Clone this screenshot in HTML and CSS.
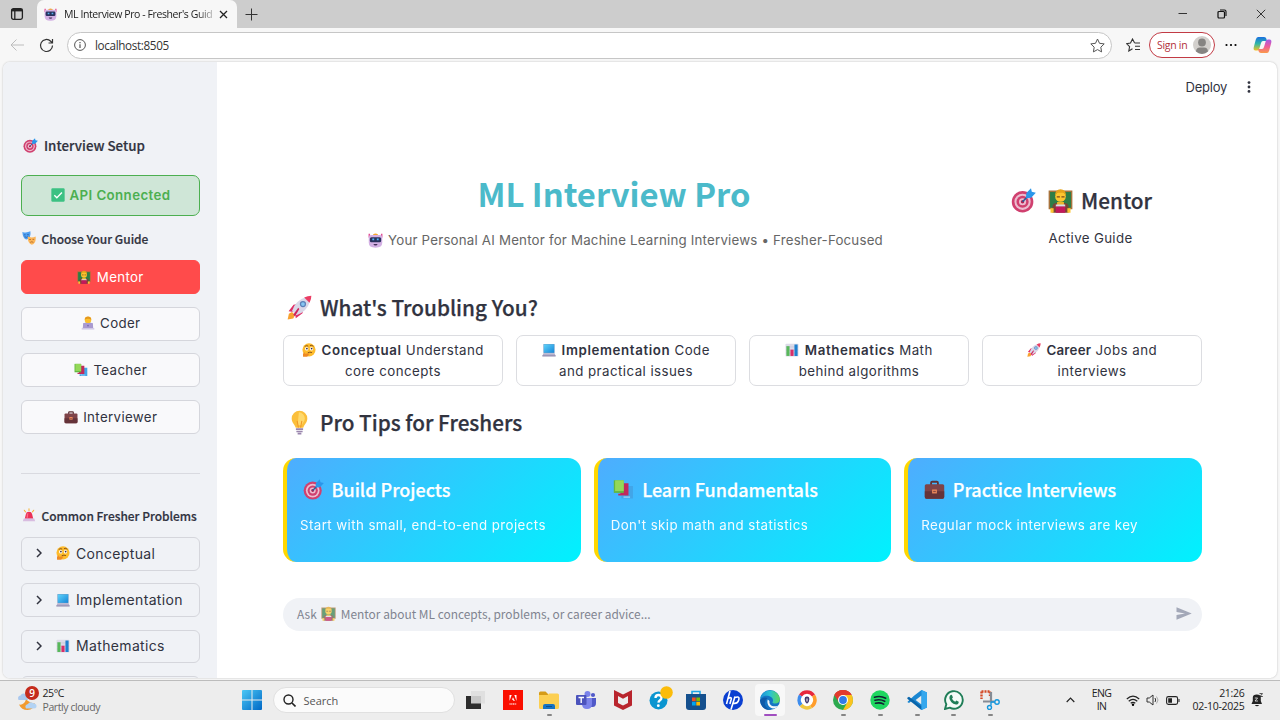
FILE: index.html
```html
<!DOCTYPE html>
<html lang="en">
<head>
<meta charset="utf-8">
<title>ML Interview Pro - Fresher's Guide</title>
<link rel="stylesheet" href="styles.css">
</head>
<body>
<svg class="defs" aria-hidden="true">
  <defs>
    <linearGradient id="g-win" x1="0" y1="0" x2="1" y2="1"><stop offset="0" stop-color="#4cc8f5"/><stop offset="1" stop-color="#0067c5"/></linearGradient>
    <linearGradient id="g-edge" x1="0" y1="0" x2="1" y2="0"><stop offset="0" stop-color="#1b8fd8"/><stop offset=".5" stop-color="#2bc3d2"/><stop offset="1" stop-color="#5fd65a"/></linearGradient>
    <linearGradient id="g-cop1" x1="0" y1="0" x2="0" y2="1"><stop offset="0" stop-color="#1a6fe0"/><stop offset=".5" stop-color="#2fb7a6"/><stop offset="1" stop-color="#f3c321"/></linearGradient>
    <linearGradient id="g-cop2" x1="0" y1="0" x2="0" y2="1"><stop offset="0" stop-color="#a45be8"/><stop offset=".5" stop-color="#ee5a9c"/><stop offset="1" stop-color="#fb9a4a"/></linearGradient>
    <linearGradient id="g-screen" x1="0" y1="0" x2="1" y2="1"><stop offset="0" stop-color="#5fd3fa"/><stop offset="1" stop-color="#1787d8"/></linearGradient>
  </defs>
  <symbol id="target" viewBox="0 0 16 16"><circle cx="7.4" cy="8.8" r="6.9" fill="#d0406f"/><circle cx="7.4" cy="8.8" r="5.2" fill="#ecbdd0"/><circle cx="7.4" cy="8.8" r="3.9" fill="#d0406f"/><circle cx="7.4" cy="8.8" r="2.3" fill="#ecbdd0"/><circle cx="7.4" cy="8.8" r="1.1" fill="#b3204f"/><path d="M7.4 8.8 12 4" stroke="#24609c" stroke-width="1"/><path d="M9.600 6.500 9.800 3.200 12.8.2l.5 2.200 2.600.6-3 3.200z" fill="#2b96ea"/></symbol>
  <symbol id="mentor" viewBox="0 0 16 16"><path fill="#a8733c" d="M.4 1.6h15.2v12H.4z"/><path fill="#2e7d46" d="M1.3 2.5h13.4v10.2H1.3z"/><path fill="#7b4336" d="M2.800 15.800v-3.400q0-2.800 3-2.800h4.400q3 0 3 2.800v3.400z"/><path fill="#e9b52b" d="M5.800 9h4.400v2.400H5.800z"/><circle cx="8" cy="5.400" r="3.400" fill="#fdc52f"/><path fill="#e6a31b" d="M4.500 4.900Q4.600.8 8 .8t3.500 4.100L10 3H6z"/><path d="M5.600 5.600h2M8.600 5.600h2" stroke="#7a4a1d" stroke-width=".8"/><path fill="#d8dce6" d="M5 10.600h6v1.400H5z"/><path fill="#c2185b" d="M5 11.800h6v4H5z"/><path fill="#fdc52f" d="M1.600 13h2v2.800h-2zM12.400 13h2v2.800h-2z"/></symbol>
  <symbol id="coder" viewBox="0 0 16 16"><path fill="#5aa0dc" d="M2.600 11q0-3.600 3.600-3.600h3.600q3.600 0 3.600 3.600v2H2.600z"/><circle cx="8" cy="4.600" r="3.700" fill="#fcc02d"/><path fill="#e5981c" d="M4.200 4.200Q4.400.5 8 .5t3.800 3.700Q8 1.800 4.200 4.200z"/><path fill="#a99ad0" d="M2.600 8h10.800l.6 6H2z"/><circle cx="8" cy="11" r=".9" fill="#7262a8"/><path fill="#c9bfe3" d="M.8 14h14.400v1.400H.8z"/></symbol>
  <symbol id="books" viewBox="0 0 16 16"><path fill="#42a5e8" d="M9.200 5.400h6v9.400H6.400v-2h2.800z"/><path fill="#9bd3f5" d="M8 13.300h5v1H8z"/><path fill="#c2295c" d="M5.600 3.200h6.200v9.400H4v-1.400h1.600z"/><path fill="#63b741" d="M.6 1h7.600v9.600H.6z"/><path fill="#94d858" d="M1.600 1h6.600v8.200H1.600z"/></symbol>
  <symbol id="case" viewBox="0 0 16 16"><path fill="none" stroke="#5c3135" stroke-width="1.400" d="M5.400 4.600V2.900q0-.8.8-.8h3.600q.8 0 .8.8v1.700"/><rect x=".6" y="4" width="14.800" height="11" rx="1.200" fill="#7f4348"/><path fill="#653339" d="M.6 9.400h14.800v4.400q0 1.200-1.200 1.200H1.800q-1.200 0-1.200-1.200z"/><path fill="#f08a5a" d="M6.200 8h3.600v3H6.200z"/><path fill="#8b4a45" d="M7 9h2v1H7z"/></symbol>
  <symbol id="robot" viewBox="0 0 16 16"><path fill="#f7a52d" d="M5 2.600Q5.200.6 8 .6t3 2z"/><path fill="#e24c93" d="M.6.800h1.600v4H.6zM13.800.8h1.600v4h-1.600z"/><path fill="#d3b0e4" d="M.8 4.600Q.8 2 3.400 2h9.200q2.600 0 2.600 2.600v5.800q0 5.200-7.200 5.200T.8 10.400z"/><rect x="2" y="4.400" width="12" height="5.400" rx="1.600" fill="#29325e"/><path fill="#54b6f5" d="M4.600 5.800h2v2h-2zM9.400 5.800h2v2h-2z"/><path fill="#46315c" d="M5.800 11.600h4.400q-.2 1.700-2.200 1.700t-2.200-1.700z"/></symbol>
  <symbol id="rocket" viewBox="0 0 16 16"><path fill="#f8a130" d="M.4 15.600 1.200 12l2-1.200 2 2L4 15z"/><path fill="#df2f67" d="M1 10.400 4.200 6.200 7 5.800l-3 5zM5.600 14.900l4.300-3.200.4-3-5.100 3.200z"/><path fill="#d9d7e8" d="M3.200 10.200Q5.600 3 12.400 1.200l2.400 2.400Q13 10.400 6 13z"/><path fill="#eb3d64" d="M11 1.600Q13.200.4 15.600.4q0 2.400-1.200 4.600z"/><path fill="#ce235b" d="M4 12.600 7.200 8.200l.7.8-2.800 4.600z"/><circle cx="10.200" cy="5.800" r="2" fill="#5b7fb8"/><circle cx="10.200" cy="5.800" r="1.200" fill="#85c6f1"/></symbol>
  <symbol id="bulb" viewBox="0 0 16 16"><path fill="#fbbf3b" d="M8 .4a5 5 0 0 1 5 5c0 2.800-2 3.800-2.600 6H5.600C5 9.200 3 8.200 3 5.400a5 5 0 0 1 5-5z"/><path fill="#ffe079" d="M7.600 1.500a4 4 0 0 1 3.800 4c0 1.800-1.200 2.500-1.900 4.200H6.800z" opacity=".8"/><path fill="none" stroke="#f19a27" stroke-width=".7" d="M6.500 7 7.300 11.300M9.500 7 8.700 11.300"/><path fill="#9a86ae" d="M5.700 11.600h4.600v1.200H5.700zM6 13.200h4v1H6zM6.800 14.600h2.400v1H6.800z"/></symbol>
  <symbol id="think" viewBox="0 0 16 16"><circle cx="8" cy="7.800" r="7.500" fill="#fdbb2c"/><ellipse cx="5.400" cy="6.600" rx="1.900" ry="2.100" fill="#fff"/><ellipse cx="10.800" cy="6.600" rx="1.900" ry="2.100" fill="#fff"/><circle cx="5.600" cy="6.300" r="1" fill="#3b2a3e"/><circle cx="11" cy="6.300" r="1" fill="#3b2a3e"/><path fill="none" stroke="#6f3d17" stroke-width=".9" stroke-linecap="round" d="M3.500 3.600q1.700-1.200 3.200-.3M9.500 2.800q2-.9 3.300.7M7 10.900q2-1 4-.1"/><path fill="#ef8a23" d="M1.200 15.600q-.8-3.400 1.400-5.200l.8 1.800 4.800-.6q.8 1-.6 1.500-.2 2.700-3.400 2.700z"/></symbol>
  <symbol id="laptop" viewBox="0 0 16 16"><rect x="1.600" y="1" width="12.800" height="10.600" rx=".7" fill="#6a9cc8"/><path fill="url(#g-screen)" d="M2.200 1.600h11.600v9.400H2.200z"/><path fill="#b5b0cc" d="M1.600 11.600h12.800l1.200 3.200H.4z"/><path fill="#8a84a8" d="M.4 14.200h15.200v1.200H.4z"/></symbol>
  <symbol id="chart" viewBox="0 0 16 16"><rect x=".6" y=".8" width="14.800" height="14.600" rx=".8" fill="#dcdbe8"/><path stroke="#b8b5cc" stroke-width=".5" d="M1 4.500h14M1 8h14M1 11.500h14"/><path fill="#58b85b" d="M1.600 3.600h3.600v11.200H1.600z"/><path fill="#d72f6a" d="M6.200 7.600h3.600v7.200H6.200z"/><path fill="#1e80cf" d="M10.800 1.600h3.600v13.200h-3.600z"/></symbol>
  <symbol id="masks" viewBox="0 0 16 16"><path fill="#4f9ff0" d="M.4 1Q5 2.600 9.600.4q1.100 8-4.200 9.400Q.8 8.800.4 1z"/><path fill="none" stroke="#1d4f9c" stroke-width=".8" d="M2.200 4.400h1.900M5.900 4.200h1.900M3 6.500q2.200 1.500 4-.1"/><path fill="#fbb65a" d="M6.600 6.400Q11 8.400 15.600 6.200q.8 8-4.400 9.400-5-1.400-4.600-9.200z"/><path fill="none" stroke="#a5591b" stroke-width=".8" d="M8.200 9.700h2M12 9.600h1.900M9.400 13q1.800-1.400 3.600 0"/></symbol>
  <symbol id="siren" viewBox="0 0 16 16"><path stroke="#f9b233" stroke-width="1.200" stroke-linecap="round" d="M8 .8v2M2.600 2.600 4 4.400M13.400 2.600 12 4.400"/><path fill="#ea3156" d="M3.200 12.200 4.400 7Q4.800 4.400 8 4.400T11.600 7l1.200 5.200z"/><path fill="#ff6b84" d="M5.700 7.200q.4-1.500 1.500-1.500L6.800 11H5.100z"/><path fill="#d8bce0" d="M2 12h12l1 3.200H1z"/></symbol>
  <symbol id="check" viewBox="0 0 16 16"><rect x=".4" y=".4" width="15.200" height="15.200" rx="1.400" fill="#3cc183"/><path fill="none" stroke="#fff" stroke-width="1.500" d="m3.800 8.200 2.900 2.900 5.800-6"/></symbol>
</svg>

<header class="tabstrip">
  <div class="tab-actions"><svg width="14" height="14" viewBox="0 0 14 14"><rect x="1.600" y="1.600" width="10.800" height="10.800" rx="1.800" fill="none" stroke="#222" stroke-width="1.300"/><path d="M1.600 3.200h10.800" stroke="#222" stroke-width="2.400"/><path d="M4.800 4v8" stroke="#222" stroke-width="1.300"/></svg></div>
  <div class="tab"><svg class="fav"><use href="#robot"/></svg><span class="tab-title">ML Interview Pro - Fresher's Guid</span><svg width="9" height="9" viewBox="0 0 9 9"><path d="m1 1 7 7M8 1 1 8" stroke="#222" stroke-width="1.300"/></svg></div>
  <svg class="new-tab" width="13" height="13" viewBox="0 0 13 13"><path d="M6.500.5v12M.5 6.500h12" stroke="#333"/></svg>
  <div class="window-controls">
    <svg width="10" height="10" viewBox="0 0 10 10"><path d="M.5 4.500h8.500" stroke="#333"/></svg>
    <svg width="10" height="10" viewBox="0 0 10 10"><rect x="1" y="2.500" width="6.500" height="6.500" rx="1" fill="none" stroke="#111" stroke-width="1.200"/><path d="M3 1h4.500Q9 1 9 2.500V7" fill="none" stroke="#111" stroke-width="1.100"/></svg>
    <svg width="10" height="10" viewBox="0 0 10 10"><path d="m.8.800 8.400 8.400M9.200.8.800 9.200" stroke="#333"/></svg>
  </div>
</header>

<nav class="toolbar">
  <svg width="14" height="14" viewBox="0 0 14 14"><path d="M14 7H1M6.500 1.500 1 7l5.500 5.500" fill="none" stroke="#bdbdbd"/></svg>
  <svg width="15" height="15" viewBox="0 0 15 15"><path d="M13.500 7.500a6 6 0 1 1-1.800-4.300l1.600 1.600M13.500 1v4h-4" fill="none" stroke="#333" stroke-width="1.200"/></svg>
  <div class="address">
    <svg width="12" height="12" viewBox="0 0 12 12"><circle cx="6" cy="6" r="5.400" fill="none" stroke="#555"/><path d="M6 5.300V9M6 3v1.200" stroke="#444" stroke-width="1.100"/></svg>
    <span>localhost:8505</span>
    <svg class="star" width="15" height="15" viewBox="0 0 15 15"><path d="m7.500 1 2 4.300 4.700.6-3.400 3.300.8 4.700-4.100-2.300-4.100 2.300.8-4.700L.8 5.900l4.700-.6z" fill="none" stroke="#555"/></svg>
  </div>
  <svg class="favs" width="15" height="14" viewBox="0 0 15 14"><path d="M8.500 4.800 6.500 1l-2 4L.6 5.600l3 3-.8 4.400 3.700-2.200M8.500 5H14M9 8.300h5M9 11.500h5" fill="none" stroke="#333" stroke-width="1.100"/></svg>
  <div class="signin"><span>Sign in</span><svg width="18" height="18" viewBox="0 0 18 18"><circle cx="9" cy="9" r="9" fill="#d3d0cd"/><circle cx="9" cy="6.500" r="3.900" fill="#868482"/><path d="M3 15.600q.2-4 4-4h4q3.800 0 4 4Q12.500 18 9 18t-6-2.400z" fill="#868482"/></svg></div>
  <svg class="dots" width="12" height="4" viewBox="0 0 12 4"><circle cx="1.500" cy="2" r="1.100"/><circle cx="6" cy="2" r="1.100"/><circle cx="10.500" cy="2" r="1.100"/></svg>
  <svg class="copilot" width="19" height="18" viewBox="0 0 19 18"><path d="M5 1h6q2 0 2.500 2l.4 2H10Q8.500 5 8 7l-1.800 6Q5.800 14.500 4 14.500H2.500Q0 14.500.8 11l2-7.500Q3.500 1 5 1z" fill="url(#g-cop1)"/><path d="M14 17H8q-2 0-2.500-2L5 13h4q1.500 0 2-2l1.800-6q.4-1.500 2.200-1.500h1.500Q19 3.500 18.200 7l-2 7.500Q15.500 17 14 17z" fill="url(#g-cop2)"/></svg>
</nav>

<div class="viewport">
<div class="page">
  <aside class="sidebar">
    <h3 class="side-title"><svg class="e15"><use href="#target"/></svg><span>Interview Setup</span></h3>
    <div class="status"><svg class="e14"><use href="#check"/></svg><span>API Connected</span></div>
    <h4 class="side-sub guide"><svg class="e14"><use href="#masks"/></svg><span>Choose Your Guide</span></h4>
    <div class="guides">
      <button class="btn primary"><svg class="e14"><use href="#mentor"/></svg>Mentor</button>
      <button class="btn"><svg class="e14"><use href="#coder"/></svg>Coder</button>
      <button class="btn"><svg class="e14"><use href="#books"/></svg>Teacher</button>
      <button class="btn"><svg class="e14"><use href="#case"/></svg>Interviewer</button>
    </div>
    <hr class="rule">
    <h4 class="side-sub problems"><svg class="e14"><use href="#siren"/></svg><span>Common Fresher Problems</span></h4>
    <div class="guides">
      <div class="expander"><svg class="chev" viewBox="0 0 6 10"><path d="m1 1 4 4-4 4"/></svg><svg class="e14"><use href="#think"/></svg>Conceptual</div>
      <div class="expander"><svg class="chev" viewBox="0 0 6 10"><path d="m1 1 4 4-4 4"/></svg><svg class="e14"><use href="#laptop"/></svg>Implementation</div>
      <div class="expander"><svg class="chev" viewBox="0 0 6 10"><path d="m1 1 4 4-4 4"/></svg><svg class="e14"><use href="#chart"/></svg>Mathematics</div>
      <div class="expander"></div>
    </div>
  </aside>

  <main class="main">
    <div class="app-bar"><span>Deploy</span><svg width="4" height="12" viewBox="0 0 4 12" fill="#31333f"><circle cx="2" cy="1.600" r="1.400"/><circle cx="2" cy="6" r="1.400"/><circle cx="2" cy="10.400" r="1.400"/></svg></div>
    <div class="hero">
      <div class="brand">
        <h1>ML Interview Pro</h1>
        <p class="tagline"><svg class="e15"><use href="#robot"/></svg><span>Your Personal AI Mentor for Machine Learning Interviews • Fresher-Focused</span></p>
      </div>
      <div class="active">
        <h3><svg class="e25"><use href="#target"/></svg><svg class="e25"><use href="#mentor"/></svg><span>Mentor</span></h3>
        <p>Active Guide</p>
      </div>
    </div>

    <h2 class="section first"><svg class="e25"><use href="#rocket"/></svg><span>What's Troubling You?</span></h2>
    <div class="topics">
      <button class="topic"><span><svg class="e14"><use href="#think"/></svg><b class="wide">Conceptual</b> Understand</span><span>core concepts</span></button>
      <button class="topic"><span><svg class="e14"><use href="#laptop"/></svg><b class="wide">Implementation</b> Code</span><span>and practical issues</span></button>
      <button class="topic"><span><svg class="e14"><use href="#chart"/></svg><b class="wide">Mathematics</b> Math</span><span>behind algorithms</span></button>
      <button class="topic"><span><svg class="e14"><use href="#rocket"/></svg><b>Career</b> Jobs and</span><span>interviews</span></button>
    </div>

    <h2 class="section second"><svg class="e25"><use href="#bulb"/></svg><span>Pro Tips for Freshers</span></h2>
    <div class="tips">
      <article class="tip"><h3><svg class="e21"><use href="#target"/></svg><span>Build Projects</span></h3><p>Start with small, end-to-end projects</p></article>
      <article class="tip"><h3><svg class="e21"><use href="#books"/></svg><span>Learn Fundamentals</span></h3><p>Don't skip math and statistics</p></article>
      <article class="tip"><h3><svg class="e21"><use href="#case"/></svg><span>Practice Interviews</span></h3><p>Regular mock interviews are key</p></article>
    </div>

    <div class="chat"><span>Ask</span><svg class="e15"><use href="#mentor"/></svg><span>Mentor about ML concepts, problems, or career advice...</span><svg class="send" width="16" height="13" viewBox="0 0 16 13"><path d="M.5.3 15.700 6.500.5 12.700V8L9 6.500.5 5z" fill="#a3a8b8"/></svg></div>
  </main>
</div>
</div>

<footer class="taskbar">
  <div class="weather">
    <div class="weather-icon"><svg width="22" height="22" viewBox="0 0 22 22"><path d="M1.500 11q-1.500-4 2-4.500Q5 3.500 9 5l2 6z" fill="#a9c8ef"/><path d="M2 15.500q5 1 7-5 5 4 9 4-1 6.500-7.500 6.500-6 0-8.500-5.500z" fill="#f29a2e"/><path d="M9 19.500q-2-3.500 2-4.500 1.500-3 5-1 4 .5 3.500 4-.5 1.500-3 1.500z" fill="#b3d3f4"/></svg><span class="badge">9</span></div>
    <div class="weather-text"><span>25°C</span><span class="muted">Partly cloudy</span></div>
  </div>
  <svg class="start" width="20" height="20" viewBox="0 0 20 20"><path d="M0 1Q0 0 1 0h8.500v9.500H0zM10.500 0H19q1 0 1 1v8.500h-9.500zM0 10.500h9.500V20H1q-1 0-1-1zM10.500 10.500H20V19q0 1-1 1h-8.500z" fill="url(#g-win)"/></svg>
  <div class="search"><svg width="13" height="13" viewBox="0 0 13 13"><circle cx="5.500" cy="5.500" r="4.500" fill="none" stroke="#222" stroke-width="1.400"/><path d="m9 9 3.500 3.500" stroke="#222" stroke-width="1.600"/></svg><span>Search</span></div>
  <div class="apps">
    <div class="app"><svg viewBox="0 0 20 20"><path d="M0 6h15v13H0z" fill="#2c2c2c"/><path d="M5 1h14v12.500H5z" fill="#dedede" opacity=".88"/></svg></div>
    <div class="app"><svg viewBox="0 0 20 20"><path d="M0 0h20v20H0z" fill="#fa0f00"/><path d="M6.500 11V5h2.200zM13.500 11V5h-2.200zM10 7.200 11.800 11h-1.200L10 9.700H8.900z" fill="#fff"/><path d="M6.500 14h7" stroke="#ffc4c0" stroke-width="1.600" stroke-dasharray="1.200 .5"/></svg></div>
    <div class="app run"><svg viewBox="0 0 20 20"><path d="M0 3q0-1.500 1.500-1.500h5L9 4v3H0z" fill="#d59b18"/><path d="M0 5h8.500L10 3.500h8.500Q20 3.500 20 5v12.500q0 1.500-1.500 1.500h-17Q0 19 0 17.500z" fill="#fccf52"/><path d="M4 19v-3q0-2 2-2h8q2 0 2 2v3z" fill="#1673c4"/><path d="M7 16h6v1H7z" fill="#0c4d8d"/></svg></div>
    <div class="app"><svg viewBox="0 0 20 20"><circle cx="11.500" cy="4" r="3" fill="#7b83eb"/><circle cx="17" cy="5" r="2.100" fill="#5059c9"/><path d="M14 8h6v5q0 4-3.500 4H14z" fill="#5059c9"/><path d="M6 8h10v6q0 5-5 5t-5-5z" fill="#7b83eb"/><rect y="5" width="10.500" height="10" rx="1" fill="#4b53bc"/><path d="M2.500 7.500H8M5.200 7.500V13" stroke="#fff" stroke-width="1.400"/></svg></div>
    <div class="app"><svg viewBox="0 0 20 20"><path d="m1 0 9 4.500L19 0v15.500L10 20l-9-4.500zM5 6v7l5 2.600 5-2.600V6l-5 2.700z" fill="#b9252d" fill-rule="evenodd"/></svg></div>
    <div class="app"><svg viewBox="0 0 20 20" class="overflow"><circle cx="8.500" cy="10.500" r="9" fill="#0a95d0"/><path d="M5.500 8q0-3 3-3t3 2.700q0 1.500-1.500 2.500t-1.600 2.500" fill="none" stroke="#fff" stroke-width="2.300"/><circle cx="8.300" cy="15.700" r="1.400" fill="#fff"/><circle cx="16.500" cy="2.500" r="6.300" fill="#fbbc0a"/></svg></div>
    <div class="app"><svg viewBox="0 0 20 20"><path d="M6 5V1.500h8V5" fill="none" stroke="#1ea6e6" stroke-width="1.600"/><path d="M0 4h20v13q0 3-3 3H3q-3 0-3-3z" fill="#15508e"/><path d="M6 7.500h3.700v3.700H6z" fill="#f25022"/><path d="M10.300 7.500H14v3.700h-3.700z" fill="#7fba00"/><path d="M6 11.800h3.700v3.700H6z" fill="#00a4ef"/><path d="M10.300 11.800H14v3.700h-3.700z" fill="#ffb900"/></svg></div>
    <div class="app"><svg viewBox="0 0 20 20"><circle cx="10" cy="10" r="10" fill="#0a3fd1"/><path d="M7 1 3.500 14M4.900 8.500q4-2 3.300.8L6.900 14M12 6.500 8 19.500M11.700 7.500q5.300-1.800 4.100 2.200-1 4.300-5.800 3.500" fill="none" stroke="#fff" stroke-width="1.600"/></svg></div>
    <div class="app run active-app"><svg viewBox="0 0 20 20"><circle cx="10" cy="10" r="10" fill="#1474c4"/><path d="M.3 8.500C1.500-1 17-3 19.800 8.500c.4 4-3 5.500-6.300 4.800-2-.5-.3-1.300-.5-3.200C12.600 5.500 4.500 4 .3 8.500z" fill="url(#g-edge)"/><path d="M7.800 9.600c-1.400 3 .6 8.500 5.200 8.800 2.500 0 4.600-1.400 5.500-2.900-5.500 2.400-10-.7-9-4.500z" fill="#f3f8fb"/><path d="M7.500 8q-4.500 3.500-1.700 8.500Q8 19.800 11 20q-9.500.500-11-9.500Q3.500 6 7.500 8z" fill="#0f5aa8"/></svg></div>
    <div class="app"><svg viewBox="0 0 20 20"><circle cx="10" cy="10" r="7" fill="#fff"/><g fill="none" stroke-width="3.600"><path d="M3.500 5.500A7.800 7.800 0 0 1 16.500 5.500" stroke="#e8273c"/><path d="M16.500 5.500A7.800 7.800 0 0 1 14 16.800" stroke="#ff9d2b"/><path d="M14 16.800A7.800 7.800 0 0 1 4 15" stroke="#f0c840"/><path d="M4 15A7.800 7.800 0 0 1 3.500 5.500" stroke="#3d8ced"/></g><path d="M10 6.500q2.400 0 2.400 2.400 0 3-2.400 4.900-2.400-1.900-2.400-4.900 0-2.400 2.400-2.400z" fill="#41396e"/><path d="M10 8.500v3" stroke="#fff" stroke-width="1"/></svg></div>
    <div class="app run"><svg viewBox="0 0 20 20"><circle cx="10" cy="10" r="10" fill="#2da94f"/><path d="M10 10 1.340 5A10 10 0 0 1 18.660 5z" fill="#e23b2e"/><path d="M1.340 5 6 12.500 10 5h8.660A10 10 0 0 0 1.340 5z" fill="#e23b2e"/><path d="M10 5h8.660A10 10 0 0 1 10 20l4.300-7.500z" fill="#fcc31e"/><circle cx="10" cy="10" r="5" fill="#fff"/><circle cx="10" cy="10" r="3.900" fill="#317be8"/></svg></div>
    <div class="app run"><svg viewBox="0 0 20 20"><circle cx="10" cy="10" r="9.700" fill="#1ed760"/><path d="M4.500 7.200q6-1.700 11.200 1M5 10.300q5.300-1.400 9.700 1M5.500 13.300q4.500-1.100 8.200.8" fill="none" stroke="#123" stroke-width="1.600" stroke-linecap="round"/></svg></div>
    <div class="app run"><svg viewBox="0 0 20 20"><path d="m14.500 0 5.500 2.500v15L14.500 20 4.500 11 2 13l-1.700-1L7 5.800z" fill="#1b87d2"/><path d="M.3 7.800 2 6.800l12.500 9.500V20L.3 8.700z" fill="#0965ab"/><path d="M14.500 5.500v9L8.600 10z" fill="#ededed"/><path d="M14.500 0 20 2.500v15L14.500 20z" fill="#35a7ed"/></svg></div>
    <div class="app run"><svg viewBox="0 0 20 20"><path d="M1 19 2.300 14.300A8.800 8.800 0 1 1 5.800 17.700z" fill="#f4fbf7" stroke="#1f7d57" stroke-width="1.900"/><path d="M6.300 5.200q1.300-1 2 .6l.6 1.600-.9 1.300q1 2.200 3.200 3.100l1.200-1.200 2.300 1.100q.2 2.700-2.800 2.900Q6.200 13 5.400 8.200q-.1-1.900.9-3z" fill="#1f7d57"/></svg></div>
    <div class="app run"><svg viewBox="0 0 20 20"><path d="M1.500 1.500H10M1.500 1.500V9M10 1.500V6" fill="none" stroke="#d44a27" stroke-width="2.400" stroke-dasharray="2 1"/><path d="M11 2v10.500M3 11.500h11" stroke="#858b94" stroke-width="2.200"/><circle cx="17" cy="12" r="2.200" fill="none" stroke="#1497dd" stroke-width="1.400"/><circle cx="9.500" cy="17.500" r="2" fill="none" stroke="#1497dd" stroke-width="1.400"/><path d="M11 11.500v4M11 12h4" stroke="#1497dd" stroke-width="1.400"/></svg></div>
  </div>
  <div class="tray">
    <svg width="9" height="6" viewBox="0 0 9 6"><path d="m.7 5 3.800-3.800L8.300 5" fill="none" stroke="#222" stroke-width="1.200"/></svg>
    <div class="lang"><span>ENG</span><span>IN</span></div>
    <div class="status-icons">
      <svg width="14" height="11" viewBox="0 0 14 11"><path d="M.8 4q6.200-5.600 12.400 0M2.700 6.200q4.300-3.700 8.600 0M4.700 8.300q2.300-2 4.600 0" fill="none" stroke="#222" stroke-width="1.200"/><circle cx="7" cy="9.700" r="1.200"/></svg>
      <svg width="14" height="12" viewBox="0 0 14 12"><path d="M1 4h2.300L7 1v10L3.300 8H1z" fill="none" stroke="#333"/><path d="M9 4q1.400 2 0 4" fill="none" stroke="#333"/><path d="M10.500 2.500q3 3.500 0 7" fill="none" stroke="#aaa"/></svg>
      <svg width="14" height="9" viewBox="0 0 14 9"><rect x=".6" y=".6" width="11" height="7.800" rx="1.800" fill="none" stroke="#222" stroke-width="1.100"/><path d="M2.200 2.200H6v4.600H2.200zM12.500 3h1v3h-1z" fill="#222"/></svg>
    </div>
    <div class="clock"><span>21:26</span><span>02-10-2025</span></div>
    <svg width="12" height="14" viewBox="0 0 12 14"><path d="M.5 11h10.500L9.800 8V4.500q0-3-4-3-4 0-4 3V8z" fill="#222"/><path d="M3.800 12h4.400q-2.200 2.600-4.400 0z" fill="#222"/><path d="M3.800 5h2.800L4 8h3" stroke="#ededed" stroke-width=".8" fill="none"/><path d="M8.500.6h3L9 3.500h2.800" stroke="#222" stroke-width=".8" fill="none"/></svg>
  </div>
</footer>
</body>
</html>
```

FILE: styles.css
```css
* { box-sizing: border-box; }
body { margin: 0; width: 1280px; height: 720px; overflow: hidden; display: flex; flex-direction: column; background: #f7f7f7; font-family: "Open Sans", sans-serif; color: #31333f; }
h1, h2, h3, h4, p { margin: 0; }
svg { flex: none; display: block; }
.defs { position: absolute; width: 0; height: 0; }
.overflow { overflow: visible; }
.e14 { width: 14px; height: 14px; }
.e15 { width: 15px; height: 15px; }
.e21 { width: 21px; height: 21px; }
.e25 { width: 25px; height: 25px; }

/* browser chrome */
.tabstrip { height: 28px; flex: none; display: flex; align-items: center; background: #cdcdcd; }
.tab-actions { width: 37px; height: 28px; padding-left: 10px; display: flex; align-items: center; }
.tab { width: 200px; height: 28px; padding: 0 9px 0 7px; display: flex; align-items: center; background: #f7f7f7; border-radius: 7px 7px 0 0; }
.fav { width: 13px; height: 13px; }
.tab-title { width: 151px; margin: 0 4px 0 7px; white-space: nowrap; font-size: 10.5px; letter-spacing: -.41px; color: #222; -webkit-mask-image: linear-gradient(90deg, #000 88%, rgba(0,0,0,.2)); mask-image: linear-gradient(90deg, #000 88%, rgba(0,0,0,.2)); }
.new-tab { margin-left: 8px; }
.window-controls { margin-left: auto; padding-right: 14px; display: flex; gap: 29px; }
.toolbar { height: 34px; flex: none; padding: 0 8px 0 10px; display: flex; align-items: center; gap: 15px; }
.address { width: 1045px; height: 27px; margin-left: -2px; padding: 0 6px; display: flex; align-items: center; gap: 9px; background: #fff; border: 1px solid #c6c6c6; border-radius: 14px; font-size: 11.7px; letter-spacing: -.35px; color: #333; }
.address .star { margin-left: auto; }
.favs { margin-left: -1px; }
.signin { width: 66px; height: 26px; margin-left: -7px; padding: 0 3px 0 7px; display: flex; align-items: center; justify-content: space-between; border: 1.5px solid #c23b45; border-radius: 13px; background: #fff; font-size: 10.5px; letter-spacing: -.3px; color: #b3303b; white-space: nowrap; }
.dots { margin-left: -5px; }
.copilot { margin-left: 1px; }

/* page */
.viewport { height: 618px; flex: none; padding: 0 3px 2px; }
.page { height: 616px; display: flex; overflow: hidden; background: #fff; border-radius: 7px; box-shadow: 0 0 2px rgba(0,0,0,.25); }
.sidebar { width: 214px; flex: none; padding: 73px 17px 0 18px; background: #f0f2f6; }
.side-title, .side-sub { display: flex; align-items: center; gap: 6px; height: 20px; font-family: "Noto Sans CJK SC", sans-serif; font-weight: 500; -webkit-text-stroke: .2px #31333f; white-space: nowrap; }
.side-title { padding-left: 2px; font-size: 13.34px; }
.side-sub { padding-left: 1px; gap: 5.5px; font-size: 11.96px; }
.status { height: 41px; margin-top: 20px; display: flex; align-items: center; justify-content: center; gap: 5px; padding-bottom: 1px; background: #cfe6d7; border: 1.5px solid #4caf50; border-radius: 7px; font: 600 13.3px Inter, sans-serif; letter-spacing: .4px; color: #4caf50; }
.guide { margin: 12px 0 12px; }
.guides { display: flex; flex-direction: column; gap: 12.7px; }
.btn { height: 34px; flex: none; padding: 0 0 1px; display: flex; align-items: center; justify-content: center; gap: 5.5px; background: #f9f9fb; border: 1px solid #d5d6dc; border-radius: 6px; font: 400 13.3px Inter, sans-serif; letter-spacing: .35px; color: #31333f; }
.primary { background: #ff4b4b; border-color: #ff4b4b; color: #fff; }
.rule { height: 1px; margin: 39px 0 31px; border: 0; background: #d9dae0; }
.problems { margin-bottom: 12px; }
.expander { height: 33.6px; flex: none; padding: 0 0 1px 14px; display: flex; align-items: center; gap: 6px; border: 1px solid #d5d6dc; border-radius: 6px; font: 400 14px Inter, sans-serif; letter-spacing: .35px; }
.chev { width: 6px; height: 10px; margin-right: 8px; fill: none; stroke: #31333f; stroke-width: 1.5; }

.main { width: 1060px; padding: 0 75px 0 66px; }
.app-bar { height: 50px; margin-right: -50.5px; display: flex; align-items: center; justify-content: flex-end; gap: 20px; font: 400 13px Inter, sans-serif; letter-spacing: -.25px; }
.hero { height: 178px; padding-top: 52px; display: grid; grid-template-columns: 685px 221px; gap: 13px; }
.brand h1 { height: 56px; margin-right: 23px; font: 700 32.8px/58px "Noto Sans CJK SC", sans-serif; color: #4bbaca; text-align: center; }
.tagline { height: 20px; margin-top: 10px; display: flex; align-items: center; justify-content: center; gap: 5px; font: 400 13.3px Inter, sans-serif; letter-spacing: .2px; color: #666; }
.active h3 { height: 30px; margin: 21px 20px 0 0; display: flex; align-items: center; justify-content: center; gap: 12px; font: 500 20.74px/30px "Noto Sans CJK SC", sans-serif; -webkit-text-stroke: .25px #31333f; }
.active h3 span { margin-left: -4px; }
.active p { margin: 13px 2px 0 0; font: 400 13.3px/20px Inter, sans-serif; letter-spacing: .34px; text-align: center; }
.app-bar { margin-right: -49px; }
.section { height: 32px; padding-left: 4px; display: flex; align-items: center; gap: 8px; font: 500 20.72px/32px "Noto Sans CJK SC", sans-serif; -webkit-text-stroke: .25px #31333f; }
.first { margin-bottom: 12px; margin-top: 1px; }
.topics { display: grid; grid-template-columns: repeat(4, 220px); gap: 13px; }
.topic { height: 51px; padding: 0; display: flex; flex-direction: column; justify-content: center; background: #fff; border: 1px solid #dcdde1; border-radius: 7px; font: 400 13.3px/21px Inter, sans-serif; letter-spacing: .45px; text-align: center; color: #31333f; }
.topic svg { display: inline-block; margin-right: 5.5px; vertical-align: -2px; }
.topic b { font-size: 13.3px; font-weight: 600; letter-spacing: .25px; }
.topic .wide { letter-spacing: .62px; }
.topic span { white-space: nowrap; }
.second { margin: 20px 0 20px; }
.tips { display: grid; grid-template-columns: repeat(3, 1fr); gap: 13px; }
.tip { height: 104px; padding: 16px 13px; background: linear-gradient(135deg, #4facfe 0%, #00f2fe 100%); background-origin: border-box; border-left: 4px solid #ffd700; border-radius: 13px; color: #fff; }
.tip h3 { height: 30px; padding-left: 2.5px; display: flex; align-items: center; gap: 8px; font: 500 17.98px/30px "Noto Sans CJK SC", sans-serif; -webkit-text-stroke: .25px #fff; white-space: nowrap; }
.tip p { margin-top: 11px; font: 400 13.3px/20px Inter, sans-serif; letter-spacing: .42px; opacity: .95; }
.chat { height: 33px; margin-top: 36px; padding: 0 10px 2px 14px; display: flex; align-items: center; gap: 4.5px; background: #f0f2f6; border-radius: 17px; font: 400 11.93px "Noto Sans CJK SC", sans-serif; color: #808490; }
.chat svg:not(.send) { opacity: .7; }
.send { margin-left: auto; }

/* taskbar */
.taskbar { height: 40px; flex: none; padding-bottom: 1px; display: flex; align-items: center; background: #ededed; border-top: 1.5px solid #bcbcbc; color: #222; }
.weather { width: 242px; padding-left: 17px; display: flex; gap: 3.5px; align-items: center; font-size: 10.5px; line-height: 14px; letter-spacing: -.42px; }
.weather-icon { position: relative; }
.badge { position: absolute; left: 8px; top: -3px; width: 14px; height: 14px; border-radius: 50%; background: #c42b1c; color: #fff; font-size: 10px; font-weight: 600; line-height: 14px; text-align: center; }
.weather-text, .lang, .clock { display: flex; flex-direction: column; }
.muted { color: #666; }
.search { width: 182px; height: 26px; margin-left: 11px; padding-left: 9px; display: flex; align-items: center; gap: 7.5px; background: #fbfbfb; border: 1px solid #e0e0e0; border-radius: 13px; font-size: 11px; color: #555; }
.apps { display: flex; margin-left: 2.5px; }
.app { position: relative; width: 36.75px; height: 32px; display: flex; align-items: center; justify-content: center; }
.app svg { width: 20px; height: 20px; }
.run::after { content: ""; position: absolute; bottom: 0; left: 16px; width: 5px; height: 2.5px; border-radius: 2px; background: #858585; }
.active-app::before { content: ""; position: absolute; inset: 0 3px; z-index: -1; background: #f8f8f8; border-radius: 4px; }
.active-app { z-index: 0; }
.active-app::after { left: 12px; width: 13px; background: #a14fc0; }
.tray { margin-left: auto; padding-right: 17px; display: flex; align-items: center; font-size: 10.5px; line-height: 13.5px; letter-spacing: -.28px; }
.lang { margin: 0 14px 0 17px; text-align: center; letter-spacing: -.5px; }
.status-icons { display: flex; align-items: center; gap: 6px; }
.clock { margin: 0 6.5px 0 13px; text-align: right; }
```
